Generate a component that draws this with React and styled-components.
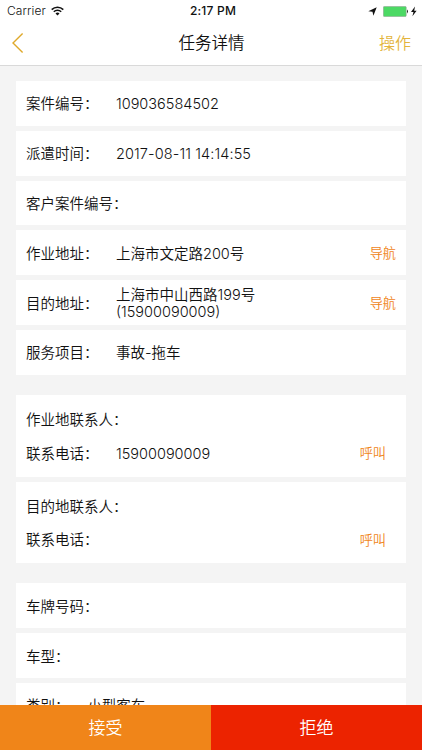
import React from 'react'
import styled, { createGlobalStyle } from 'styled-components';

const GlobalStyle = createGlobalStyle`
  * {
    box-sizing: border-box;
  }

  body {
    margin: 0;
    background: #f4f4f4;
    color: #111111;
    font-family: Inter, "Noto Sans CJK SC DemiLight", "Noto Sans CJK SC", sans-serif;
    font-weight: 350;
  }

  button {
    border: 0;
    padding: 0;
    background: none;
    font-family: inherit;
    font-weight: inherit;
  }
`

const Screen = styled.div`
  height: 750px;
  display: flex;
  flex-direction: column;
  overflow: hidden;
`

const StatusBar = styled.div`
  height: 22px;
  flex-shrink: 0;
  display: grid;
  grid-template-columns: 1fr auto 1fr;
  align-items: center;
  padding: 0 4px 0 7px;
  background: #ffffff;
  font-size: 12px;
  line-height: 22px;
`

const StatusSide = styled.div`
  display: flex;
  align-items: center;
  justify-content: ${props => props.$end ? "flex-end" : "flex-start"};
  gap: ${props => props.$end ? "6px" : "5px"};
  letter-spacing: 0.1px;
`

const Clock = styled.div`
  padding-left: 1px;
  font-weight: 500;
  letter-spacing: 0.2px;
`

const NavBar = styled.header`
  height: 44px;
  flex-shrink: 0;
  display: grid;
  grid-template-columns: 1fr auto 1fr;
  align-items: center;
  padding: 0 11px 1px 12px;
  background: #ffffff;
  border-bottom: 1px solid #d9d9d9;
`

const BackButton = styled.button`
  justify-self: start;
  height: 22px;

  svg {
    display: block;
  }
`

const Title = styled.h1`
  margin: 0;
  font-size: 16.5px;
  font-weight: inherit;
  line-height: 24px;
`

const NavAction = styled.button`
  justify-self: end;
  color: #e3b43c;
  font-size: 16px;
  line-height: 24px;
`

const Content = styled.main`
  flex: 1;
  min-height: 0;
  overflow: hidden;
  padding: 15px 15.6px 0;
`

const Group = styled.section`
  display: flex;
  flex-direction: column;
  gap: 5px;
  margin-bottom: 20.2px;
`

const Card = styled.div`
  display: flex;
  flex-direction: column;
  justify-content: center;
  height: ${props => props.$tall ? "81.6px" : "44.8px"};
  padding: 1px 10.4px 0;
  background: #ffffff;
`

const Line = styled.div`
  display: flex;
  align-items: center;
  height: ${props => props.$contact ? "33.6px" : "auto"};
  padding-right: ${props => props.$contact ? "10px" : "0"};
`

const LabelText = styled.span`
  min-width: ${props => props.$narrow ? "61.4px" : "90px"};
  font-size: 14.5px;
  line-height: 17px;
  white-space: nowrap;
`

const Colon = styled.span`
  display: inline-block;
`

const Value = styled.span`
  flex: 1;
  font-size: 14.5px;
  line-height: 17px;
  letter-spacing: ${props => props.$spacing || "normal"};
  white-space: pre-line;
`

const Action = styled.button`
  color: #f08519;
  font-size: 13.2px;
  line-height: 20px;
`

const Footer = styled.footer`
  flex-shrink: 0;
  display: grid;
  grid-template-columns: 1fr 1fr;
  height: 45.2px;
`

const FooterButton = styled.button`
  padding-top: 1px;
  background: ${props => props.$bg};
  color: #ffffff;
  font-size: 17px;
  line-height: 24px;
`

const WifiIcon = () => (
  <svg width="13" height="10" viewBox="0 0 13 10" fill="none" stroke="#111" strokeWidth="1.6">
    <path d="M0.7 3.6A8.3 8.3 0 0 1 12.3 3.6" />
    <path d="M2.8 5.8A5.3 5.3 0 0 1 10.2 5.8" />
    <path d="M6.5 9.4L4.5 7.4A2.9 2.9 0 0 1 8.5 7.4Z" fill="#111" stroke="none" />
  </svg>
)

const LocationIcon = () => (
  <svg width="9" height="9" viewBox="0 0 9 9" fill="#111">
    <path d="M8.7 0.3L5.4 8.7L4.5 4.7L0.3 4.2Z" />
  </svg>
)

const BatteryIcon = () => (
  <svg width="35" height="11" viewBox="0 0 35 11">
    <rect x="0.4" y="0.4" width="22.8" height="10.2" rx="1" fill="#4cd964" stroke="#8f9f91" strokeWidth="0.6" />
    <path d="M24 3.6Q26 5.5 24 7.4Z" fill="#222" />
    <path d="M32 0.6L28 6H30.5L29.4 10.2L33.6 4.7H31.2Z" fill="#111" />
  </svg>
)

const taskRows = [
  { label: '案件编号', value: '109036584502' },
  { label: '派遣时间', value: '2017-08-11 14:14:55', spacing: '0.1px' },
  { label: '客户案件编号' },
  { label: '作业地址', value: '上海市文定路200号', action: '导航' },
  { label: '目的地址', value: '上海市中山西路199号\n(15900090009)', action: '导航' },
  { label: '服务项目', value: '事故-拖车' },
]

const contacts = [
  { name: '作业地联系人', phone: '15900090009' },
  { name: '目的地联系人', phone: '' },
]

const carRows = [
  { label: '车牌号码' },
  { label: '车型' },
  { label: '类别', value: '小型客车', narrow: true },
]

const Label = ({ children, narrow }) => (
  <LabelText $narrow={narrow}>
    {children}<Colon>：</Colon>
  </LabelText>
)

const InfoCard = ({ label, value, action, narrow, spacing }) => (
  <Card>
    <Line>
      <Label narrow={narrow}>{label}</Label>
      <Value $spacing={spacing}>{value}</Value>
      {action && <Action>{action}</Action>}
    </Line>
  </Card>
)

const ContactCard = ({ name, phone }) => (
  <Card $tall>
    <Line $contact>
      <Label>{name}</Label>
    </Line>
    <Line $contact>
      <Label>联系电话</Label>
      <Value>{phone}</Value>
      <Action>呼叫</Action>
    </Line>
  </Card>
)

const App = () => {
  return (
    <Screen lang="zh-CN">
      <GlobalStyle />

      <StatusBar>
        <StatusSide>
          Carrier
          <WifiIcon />
        </StatusSide>
        <Clock>2:17 PM</Clock>
        <StatusSide $end>
          <LocationIcon />
          <BatteryIcon />
        </StatusSide>
      </StatusBar>

      <NavBar>
        <BackButton aria-label="返回">
          <svg width="12" height="22" viewBox="0 0 12 22" fill="none" stroke="#dfa92b" strokeWidth="1.4">
            <path d="M10.6 1.4L1 11L10.6 20.6" />
          </svg>
        </BackButton>
        <Title>任务详情</Title>
        <NavAction>操作</NavAction>
      </NavBar>

      <Content>
        <Group>
          {taskRows.map(row => <InfoCard key={row.label} {...row} />)}
        </Group>
        <Group>
          {contacts.map(contact => <ContactCard key={contact.name} {...contact} />)}
        </Group>
        <Group>
          {carRows.map(row => <InfoCard key={row.label} {...row} />)}
        </Group>
      </Content>

      <Footer>
        <FooterButton $bg="#f08519">接受</FooterButton>
        <FooterButton $bg="#ec2300">拒绝</FooterButton>
      </Footer>
    </Screen>
  )
}

export default App;
